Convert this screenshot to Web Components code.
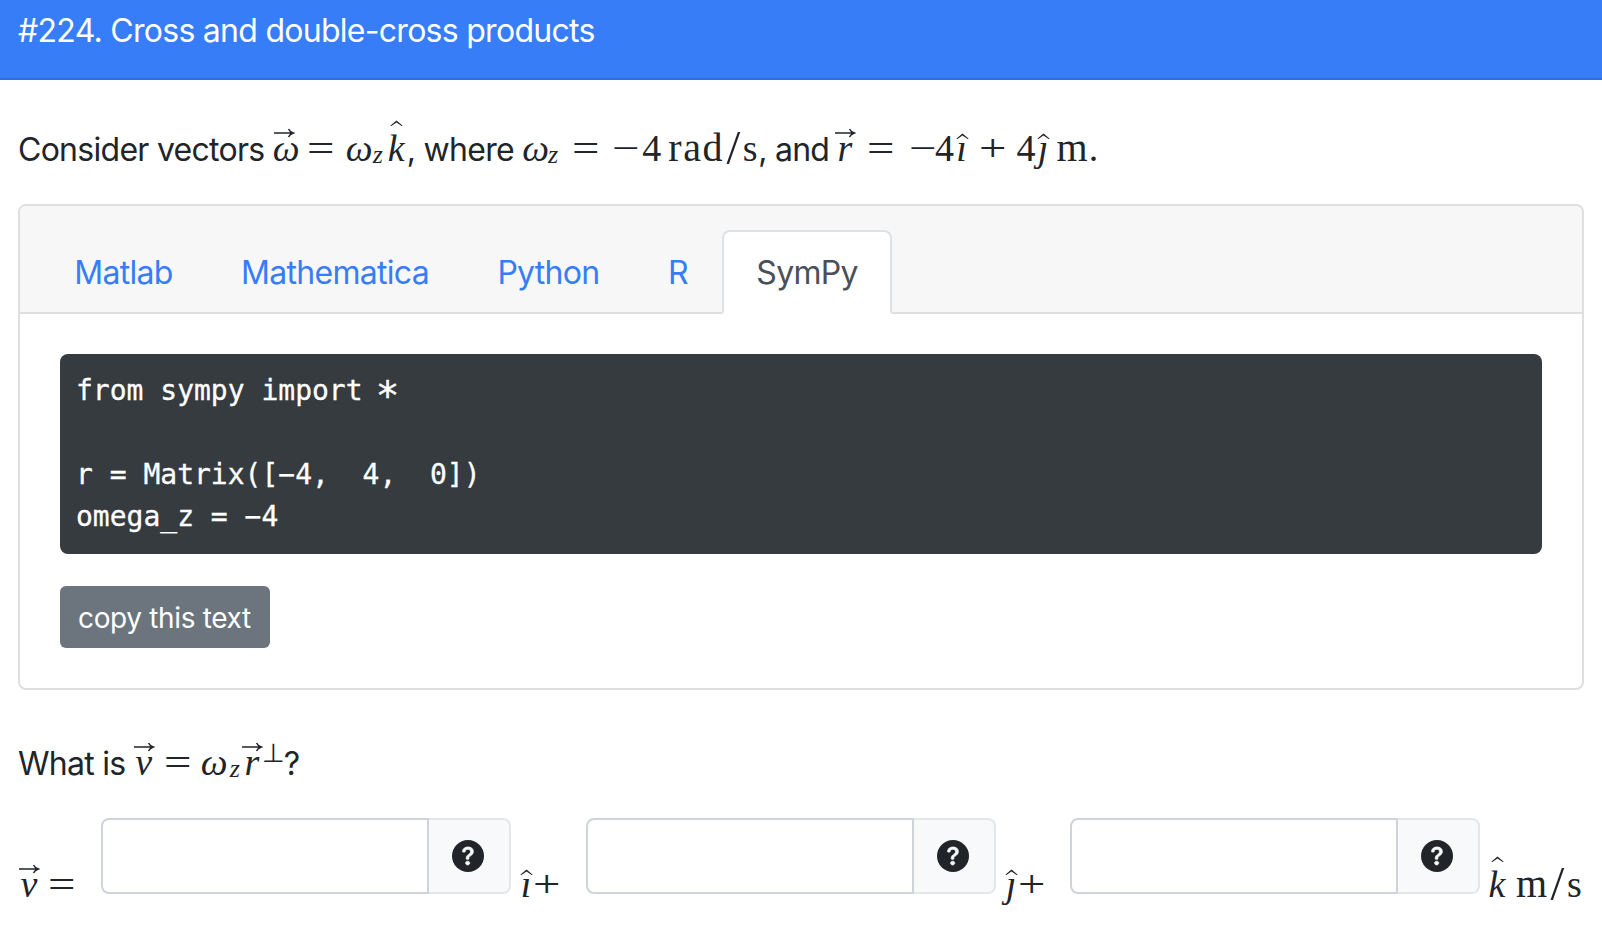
<!DOCTYPE html>
<html lang="en">
<head>
<meta charset="utf-8">
<title>Cross and double-cross products</title>
<style>
  html, body { margin: 0; background: #fff; }
  body { font: 32px/48px Inter, "Liberation Sans", sans-serif; color: #212529; letter-spacing: -0.72px; }
  .wide { letter-spacing: 1.500px; font-size: 40px; }
  .op { display: inline-block; transform: scaleX(1.28); }
  .sl { display: inline-block; transform: scale(1.3, 1.25); }
  .star { display: inline-block; transform: translateY(5px) scale(1.4); }
</style>
</head>
<body>
<page-header>#224. Cross and double-cross products</page-header>
<page-body>
  <text-line mb="30">Consider vectors <m-box w="22" acc="vec"><i>ω</i></m-box><m-box w="51"><span class="op">=</span></m-box><m-box w="24"><i>ω</i></m-box><m-box w="16" sub><i>z</i></m-box><m-box w="21" acc="hat"><i>k</i></m-box>, where <m-box w="22"><i>ω</i></m-box><m-box w="18" sub><i>z</i></m-box><m-box w="48"><span class="op">=</span></m-box><m-box w="32"><span class="op">−</span></m-box><m-box w="17">4</m-box><m-box w="9"></m-box><m-box w="56"><span class="wide">rad</span></m-box><m-box w="18"><span class="sl">/</span></m-box><m-box w="16">s</m-box>, and <m-box w="14" acc="vec"><i>r</i></m-box><m-box w="59"><span class="op">=</span></m-box><m-box w="24"><span class="op">−</span></m-box><m-box w="20">4</m-box><m-box w="14" acc="hat-low"><i>ı</i></m-box><m-box w="48"><span class="op">+</span></m-box><m-box w="17">4</m-box><m-box w="19" acc="hat-low"><i>ȷ</i></m-box><m-box w="4"></m-box><m-box w="32"><span class="wide">m</span></m-box><m-box w="10">.</m-box></text-line>
  <tab-card>
    <tab-link>Matlab</tab-link>
    <tab-link>Mathematica</tab-link>
    <tab-link>Python</tab-link>
    <tab-link>R</tab-link>
    <tab-link active>SymPy</tab-link>
    <code-block slot="body">from sympy import <span class="star">*</span>

r = Matrix([−4,  4,  0])
omega_z = −4</code-block>
    <copy-button slot="body">copy this text</copy-button>
  </tab-card>
  <text-line mt="50" mb="30">What is <m-box w="20" acc="vec"><i>v</i></m-box><m-box w="47"><span class="op">=</span></m-box><m-box w="27"><i>ω</i></m-box><m-box w="14" sub><i>z</i></m-box><m-box w="20" acc="vec"><i>r</i></m-box><m-box w="22" sup>⊥</m-box>?</text-line>
  <answer-row>
    <m-tail w="83"><m-box w="22" acc="vec"><i>v</i></m-box><m-box w="44"><span class="op">=</span></m-box></m-tail>
    <answer-input></answer-input>
    <m-tail w="75" pad="8"><m-box w="14" acc="hat-low"><i>ı</i></m-box><m-box w="27"><span class="op">+</span></m-box></m-tail>
    <answer-input></answer-input>
    <m-tail w="74" pad="8"><m-box w="14" acc="hat-low"><i>ȷ</i></m-box><m-box w="28"><span class="op">+</span></m-box></m-tail>
    <answer-input></answer-input>
    <m-tail w="106" pad="6"><m-box w="22" acc="hat"><i>k</i></m-box><m-box w="8"></m-box><m-box w="32"><span class="wide">m</span></m-box><m-box w="18"><span class="sl">/</span></m-box><m-box w="17">s</m-box></m-tail>
  </answer-row>
</page-body>

<script>
  // small helper so each element keeps its markup and styles in its own shadow root
  function defineEl(name, css, html, init) {
    customElements.define(name, class extends HTMLElement {
      constructor() {
        super();
        this.attachShadow({ mode: "open" });
        this.shadowRoot.innerHTML = `<style>${css}</style>${html}`;
      }
      connectedCallback() {
        if (init) init(this);
      }
    });
  }

  defineEl("page-header", `
    :host { display: block; box-sizing: border-box; height: 80px; padding: 7px 18px 0; background: #377df8; border-bottom: 2px solid #2f6fdf; color: #fff; }
  `, `<slot></slot>`);

  defineEl("page-body", `
    :host { display: block; padding: 46px 18px 40px; }
  `, `<slot></slot>`);

  defineEl("text-line", `
    :host { display: block; height: 48px; white-space: pre; }
  `, `<slot></slot>`, (el) => {
    el.style.marginTop = (el.getAttribute("mt") || 0) + "px";
    el.style.marginBottom = (el.getAttribute("mb") || 0) + "px";
  });

  defineEl("m-box", `
    :host { display: inline-block; position: relative; height: 48px; text-align: center; vertical-align: top; white-space: nowrap;
      font: 38px/44px "Liberation Serif", serif; letter-spacing: 0; color: #212529; }
    :host([sub]) { font-size: 26px; line-height: 58px; }
    :host([sup]) { font-size: 26px; line-height: 28px; }
    svg { position: absolute; left: 50%; }
    .vec { margin-left: -11px; top: 2px; }
    .hat { margin-left: -6px; top: -6px; }
    .low { top: 7px; }
  `, `<slot></slot><span id="acc"></span>`, (el) => {
    el.style.width = el.getAttribute("w") + "px";
    const kind = el.getAttribute("acc");
    const acc = el.shadowRoot.getElementById("acc");
    if (kind === "vec") {
      acc.innerHTML = `<svg class="vec" width="22" height="10" viewBox="0 0 22 10"><path d="M1 5h19M15.500 1c.8 1.800 2.400 3.200 4.800 4-2.400.8-4 2.200-4.800 4" fill="none" stroke="#212529" stroke-width="1.500"/></svg>`;
    } else if (kind) {
      const cls = kind === "hat-low" ? "hat low" : "hat";
      acc.innerHTML = `<svg class="${cls}" width="13" height="7" viewBox="0 0 13 7"><path d="M6.500 .5 12.500 5.600 12 6.300 6.500 2.600 1 6.300 .5 5.600z" fill="#212529"/></svg>`;
    }
  });

  defineEl("m-tail", `
    :host { display: block; flex: none; box-sizing: border-box; height: 48px; margin-bottom: -16px; white-space: nowrap; }
  `, `<slot></slot>`, (el) => {
    el.style.width = el.getAttribute("w") + "px";
    el.style.paddingLeft = (el.getAttribute("pad") || 0) + "px";
  });

  defineEl("tab-card", `
    :host { display: block; box-sizing: border-box; width: 1566px; background: #fff; border: 2px solid #dfdfdf; border-radius: 8px; overflow: hidden; }
    .head { display: flex; height: 108px; box-sizing: border-box; padding: 24px 20px 0; background: #f7f7f7; border-bottom: 2px solid #dfdfdf; }
    .body { padding: 40px; }
  `, `<div class="head"><slot></slot></div><div class="body"><slot name="body"></slot></div>`);

  defineEl("tab-link", `
    :host { display: block; box-sizing: border-box; height: 84px; padding: 17px 32.25px 0; border: 2px solid transparent; border-radius: 8px 8px 0 0; color: #377df8; }
    :host([active]) { background: #fff; color: #495057; border-color: #dee2e6 #dee2e6 #fff; }
  `, `<slot></slot>`);

  defineEl("code-block", `
    :host { display: block; padding: 16px; background: #363b3f; border-radius: 8px; color: #fff; white-space: pre;
      font: 28px/42px "DejaVu Sans Mono", monospace; letter-spacing: 0; -webkit-text-stroke: 0.3px #fff; }
  `, `<slot></slot>`);

  defineEl("copy-button", `
    :host { display: block; box-sizing: border-box; width: 210px; height: 62px; margin-top: 32px; padding: 9px 18px; background: #6c757d; border-radius: 6px; color: #fff;
      font-size: 28px; line-height: 46px; letter-spacing: -0.35px; white-space: nowrap; }
  `, `<slot></slot>`);

  defineEl("answer-row", `
    :host { display: flex; align-items: flex-end; height: 76px; }
  `, `<slot></slot>`);

  defineEl("answer-input", `
    :host { display: flex; flex: none; box-sizing: border-box; width: 410px; height: 76px; }
    .field { flex: 1; border: 2px solid #ced4da; border-radius: 8px 0 0 8px; background: #fff; }
    .addon { display: flex; align-items: center; justify-content: center; width: 82px; box-sizing: border-box; padding-right: 2px; background: #f8f9fa; border: 2px solid #e4e7ea; border-left: 0; border-radius: 0 8px 8px 0; }
    svg { display: block; }
  `, `<div class="field"></div><div class="addon"><svg width="32" height="32" viewBox="0 0 16 16"><circle cx="8" cy="8" r="8" fill="#212529"/><path d="M5.496 6.033h.825c.138 0 .248-.113.266-.25.09-.656.54-1.134 1.342-1.134.686 0 1.314.343 1.314 1.168 0 .635-.374.927-.965 1.371-.673.489-1.206 1.06-1.168 1.987l.003.217a.25.25 0 0 0 .25.246h.811a.25.25 0 0 0 .25-.25v-.105c0-.718.273-.927 1.01-1.486.609-.463 1.244-.977 1.244-2.056 0-1.511-1.276-2.241-2.673-2.241-1.267 0-2.655.59-2.75 2.286a.237.237 0 0 0 .241.247zm2.325 6.443c.61 0 1.029-.394 1.029-.927 0-.552-.42-.94-1.029-.94-.584 0-1.009.388-1.009.94 0 .533.425.927 1.01.927z" fill="#f8f9fa" stroke="#f8f9fa" stroke-width=".4"/></svg></div>`);
</script>
</body>
</html>
